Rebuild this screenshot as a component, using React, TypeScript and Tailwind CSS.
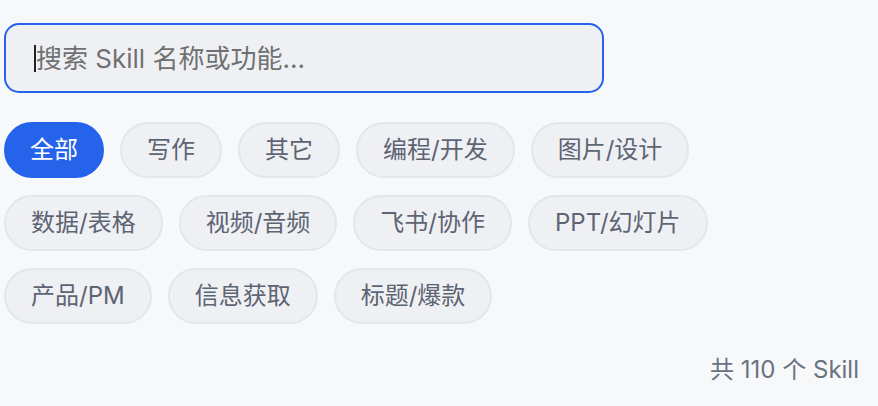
import { useState } from "react";

const categories = [
  "全部",
  "写作",
  "其它",
  "编程/开发",
  "图片/设计",
  "数据/表格",
  "视频/音频",
  "飞书/协作",
  "PPT/幻灯片",
  "产品/PM",
  "信息获取",
  "标题/爆款",
];

export default function App() {

  const [active, setActive] =
    useState("全部");

  const [query, setQuery] =
    useState("");

  return (
    <div
      className="min-h-screen bg-[#f7f8fa] pt-[23px] pl-[4px] pr-[19px]"
      style={{ fontFamily: 'Inter, "Noto Sans CJK SC", sans-serif' }}
    >

      {/* SEARCH */}
      <div className="relative w-[600px]">

        <input
          autoFocus
          value={query}
          onChange={(e) => setQuery(e.target.value)}
          placeholder="搜索 Skill 名称或功能..."
          className="block h-[70px] w-full rounded-[15px] border-2 border-[#2563eb] bg-[#eff0f4] pl-[30px] text-[26px] text-[#111827] caret-transparent outline-none placeholder:text-[#707070]"
        />

        {/* caret */}
        {!query && (
          <span className="pointer-events-none absolute left-[30px] top-[22px] h-[27px] w-[2px] bg-[#1f2328]" />
        )}

      </div>

      {/* CATEGORIES */}
      <div className="mt-[29px] flex max-w-[780px] flex-wrap gap-x-4 gap-y-[17px]">

        {categories.map((cat) => (

          <button
            key={cat}
            onClick={() => setActive(cat)}
            className={
              cat === active
                ? "h-[56px] rounded-full border-2 border-[#2563eb] bg-[#2563eb] px-[24px] text-[24px] leading-[32px] text-white"
                : "h-[56px] rounded-full border-2 border-[#e3e6ec] bg-[#eff0f4] px-[25px] text-[24px] leading-[32px] text-[#5d6472]"
            }
          >
            {cat}
          </button>

        ))}

      </div>

      {/* COUNT */}
      <div className="mt-[30px] text-right text-[24px] leading-[32px] text-[#6b7280]">
        共 110 个 Skill
      </div>

    </div>
  );
}
